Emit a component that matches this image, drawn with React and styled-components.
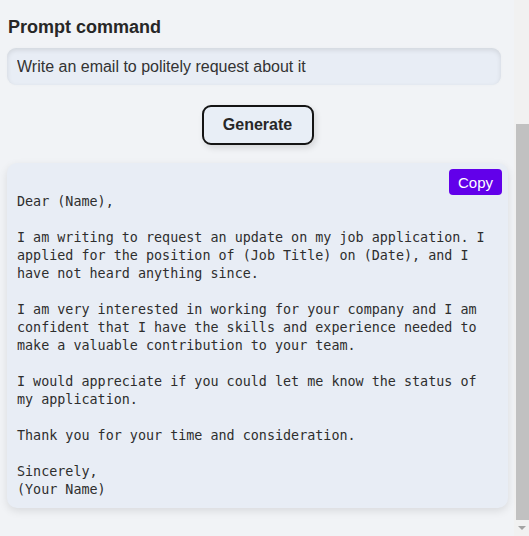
import React, { useState } from 'react'
import styled, { createGlobalStyle } from 'styled-components'

const GlobalStyle = createGlobalStyle`
  html, body {
    margin: 0;
    padding: 0;
    background: #f1f3f6;
  }
  body {
    font-family: 'Liberation Sans', Arial, sans-serif;
    color: #2b2b2b;
  }
`

const Frame = styled.div`
  display: flex;
  height: 100vh;
  overflow: hidden;
`

const Page = styled.main`
  flex: 1;
  min-width: 0;
  padding: 0 6px 28px 7px;
`

// the window's scroll rail, sitting at the bottom of the page
const ScrollRail = styled.div`
  width: 15px;
  display: flex;
  flex-direction: column;
  background: #f1f1f1;
`

const ScrollThumb = styled.div`
  flex: 1;
  margin: 124px 0 0 2px;
  background: #c1c1c1;
`

const ScrollArrow = styled.div`
  height: 16px;
  display: flex;
  align-items: center;
  justify-content: center;
  padding-left: 1px;
  &::after {
    content: '';
    border-left: 4px solid transparent;
    border-right: 4px solid transparent;
    border-top: 4px solid #a3a3a3;
  }
`

const Label = styled.h2`
  margin: 0;
  padding: 15px 0 0 1px;
  font-size: 18px;
  line-height: 24px;
  font-weight: 700;
  color: #272727;
`

const PromptInput = styled.input`
  display: block;
  box-sizing: border-box;
  width: calc(100% - 7px);
  height: 37px;
  margin-top: 9px;
  padding: 0 10px;
  border: none;
  border-radius: 9px;
  background: #e8edf5;
  box-shadow: inset 0 2px 5px rgba(0, 0, 0, 0.1), 0 0 3px rgba(0, 0, 0, 0.03);
  font-family: 'Liberation Sans', Arial, sans-serif;
  font-size: 16px;
  color: #333;
  outline: none;
`

const Actions = styled.div`
  display: flex;
  justify-content: center;
  padding: 20px 0 18px;
`

const GenerateButton = styled.button`
  width: 112px;
  height: 40px;
  border: 2px solid #141414;
  border-radius: 9px;
  background: #e8eef6;
  box-shadow: 2px 3px 6px rgba(0, 0, 0, 0.12);
  font-family: 'Liberation Sans', Arial, sans-serif;
  font-size: 16px;
  font-weight: 700;
  color: #272727;
  cursor: pointer;
`

const ResultCard = styled.div`
  position: relative;
  border-radius: 10px;
  background: #e8edf5;
  box-shadow: 0 3px 8px rgba(0, 0, 0, 0.1);
`

const CopyButton = styled.button`
  position: absolute;
  top: 6px;
  right: 6px;
  width: 53px;
  height: 26px;
  padding: 0;
  border: none;
  border-radius: 4px;
  background: ${props => (props.$copied ? '#4a00b4' : '#6200ea')};
  color: #fff;
  font-family: 'Liberation Sans', Arial, sans-serif;
  font-size: 15px;
  cursor: pointer;
`

const Output = styled.pre`
  margin: 0;
  padding: 30px 10px 9px;
  white-space: pre-wrap;
  font-family: 'DejaVu Sans Mono', monospace;
  font-size: 13.4px;
  line-height: 18px;
  color: #2e2e2e;
`

const email = `Dear (Name),

I am writing to request an update on my job application. I applied for the position of (Job Title) on (Date), and I have not heard anything since.

I am very interested in working for your company and I am confident that I have the skills and experience needed to make a valuable contribution to your team.

I would appreciate if you could let me know the status of my application.

Thank you for your time and consideration.

Sincerely,
(Your Name)`

const App = () => {
  const [prompt, setPrompt] = useState('Write an email to politely request about it')
  const [copied, setCopied] = useState(false)

  return (
    <Frame>
      <GlobalStyle />
      <Page>
        <Label>Prompt command</Label>
        <PromptInput value={prompt} onChange={e => setPrompt(e.target.value)} />
        <Actions>
          <GenerateButton>Generate</GenerateButton>
        </Actions>
        <ResultCard>
          <CopyButton $copied={copied} onClick={() => setCopied(true)}>
            Copy
          </CopyButton>
          <Output>{email}</Output>
        </ResultCard>
      </Page>
      <ScrollRail aria-hidden="true">
        <ScrollThumb />
        <ScrollArrow />
      </ScrollRail>
    </Frame>
  )
}

export default App
